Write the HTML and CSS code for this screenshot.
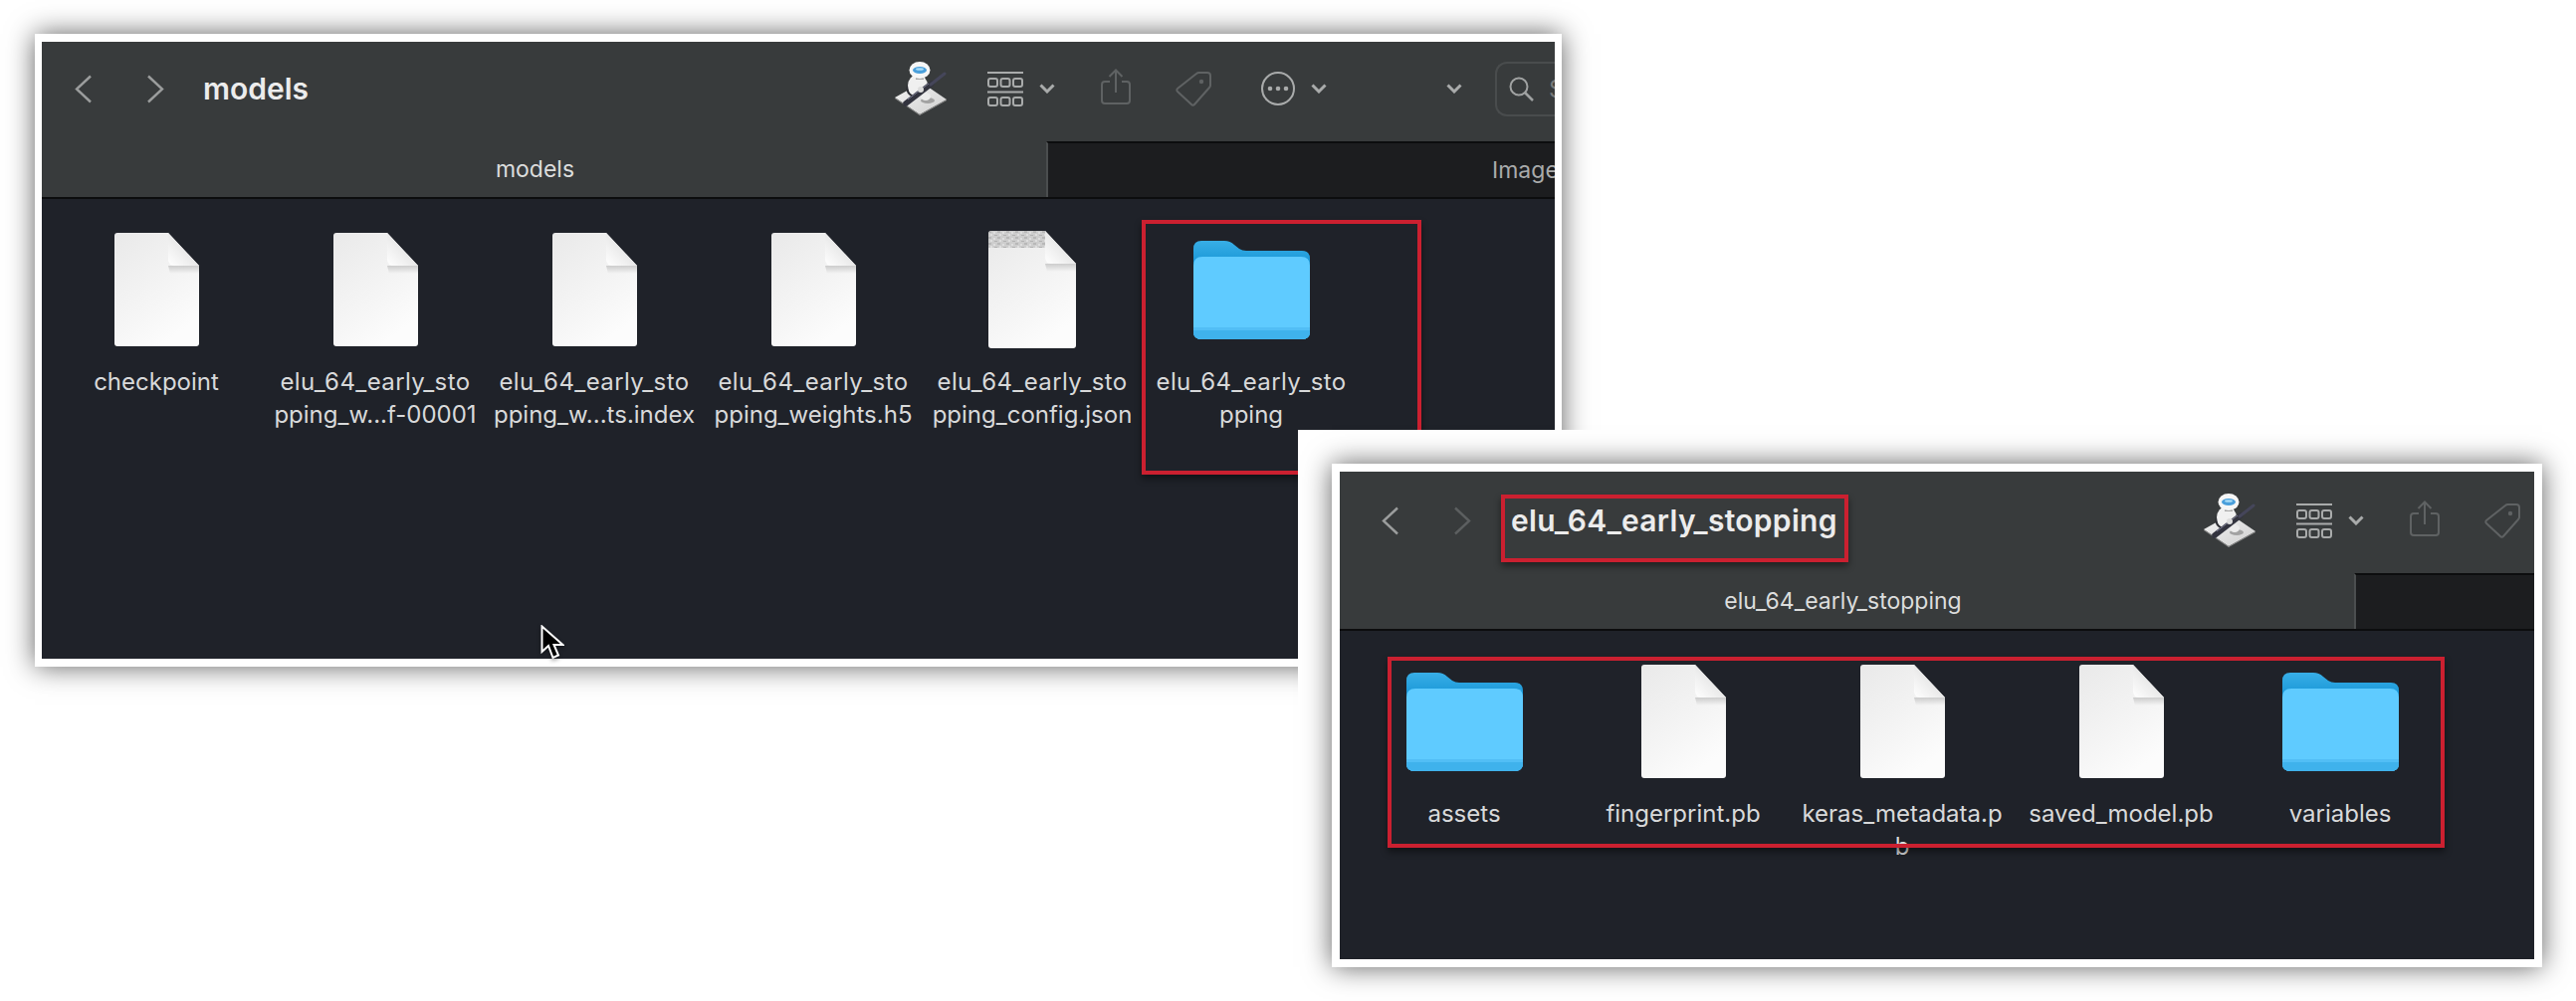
FILE: index.html
```html
<!DOCTYPE html>
<html lang="en">
  <head>
    <meta charset="UTF-8" />
    <title>Finder windows</title>
    <link rel="stylesheet" href="styles.css">
  </head>
  <body>
    <svg class="defs" width="0" height="0" aria-hidden="true">
      <defs>
        <linearGradient id="page" x1="0" y1="0" x2="0.55" y2="1">
          <stop offset="0" stop-color="#e9e9e9" />
          <stop offset="0.7" stop-color="#f6f6f6" />
          <stop offset="1" stop-color="#fcfcfc" />
        </linearGradient>
        <linearGradient id="flap" x1="0" y1="1" x2="1" y2="0">
          <stop offset="0" stop-color="#ffffff" />
          <stop offset="1" stop-color="#d4d4d4" />
        </linearGradient>
        <linearGradient id="shade" x1="0" y1="0" x2="0" y2="1">
          <stop offset="0" stop-color="#000" stop-opacity="0.16" />
          <stop offset="1" stop-color="#000" stop-opacity="0" />
        </linearGradient>
        <linearGradient id="folderBack" x1="0" y1="0" x2="0" y2="1">
          <stop offset="0" stop-color="#38aee6" />
          <stop offset="0.2" stop-color="#1d9ad9" />
        </linearGradient>
        <linearGradient id="base" x1="0" y1="0" x2="1" y2="1">
          <stop offset="0" stop-color="#f4f4f4" />
          <stop offset="1" stop-color="#cfcfcf" />
        </linearGradient>
        <pattern id="noise" width="9" height="6" patternUnits="userSpaceOnUse">
          <rect width="9" height="6" fill="#cdcdcd" />
          <rect x="0" y="0" width="3" height="2" fill="#b8b8b8" />
          <rect x="5" y="1" width="2" height="2" fill="#dedede" />
          <rect x="2" y="3" width="2" height="2" fill="#dedede" />
          <rect x="6" y="4" width="3" height="1" fill="#b2b2b2" />
        </pattern>

        <symbol id="i-file" viewBox="0 0 85 114">
          <path d="M3 0H54L85 33V111a3 3 0 0 1-3 3H3a3 3 0 0 1-3-3V3a3 3 0 0 1 3-3Z" fill="url(#page)" />
          <path d="M54 33H85V41H56Z" fill="url(#shade)" />
          <path d="M54 0L85 33H60a6 6 0 0 1-6-6Z" fill="url(#flap)" />
        </symbol>
        <symbol id="i-file-noisy" viewBox="0 0 88 118">
          <path d="M3 0H57L88 33V115a3 3 0 0 1-3 3H3a3 3 0 0 1-3-3V3a3 3 0 0 1 3-3Z" fill="url(#page)" />
          <path d="M3 0H57V17H0V3a3 3 0 0 1 3-3Z" fill="url(#noise)" />
          <path d="M57 33H88V41H59Z" fill="url(#shade)" />
          <path d="M57 0L88 33H63a6 6 0 0 1-6-6Z" fill="url(#flap)" />
        </symbol>
        <symbol id="i-folder" viewBox="0 0 117 99">
          <path d="M8 0H31Q37 0 41 4L46 8Q49 10 53 10H109Q117 10 117 18V91Q117 99 109 99H8Q0 99 0 91V8Q0 0 8 0Z" fill="url(#folderBack)" />
          <path d="M9 16H108Q117 16 117 25V91Q117 99 109 99H8Q0 99 0 91V25Q0 16 9 16Z" fill="#5fcbff" />
          <path d="M0 87H117V91Q117 99 109 99H8Q0 99 0 91Z" fill="#3fb2ec" />
          <path d="M0 87H117V90H0Z" fill="#52bef5" />
        </symbol>
        <symbol id="i-robot" viewBox="0 0 52 54">
          <path d="M0 36L27 21L52 38L25 53Z" fill="url(#base)" />
          <path d="M0 36L25 53L52 38V39L25 54L0 37Z" fill="#8f8f8f" />
          <ellipse cx="33" cy="39" rx="7" ry="3" fill="#a2a2a2" />
          <path d="M15 21Q9 31 19 35" fill="none" stroke="#2c2d33" stroke-width="2.200" />
          <ellipse cx="23" cy="24" rx="10" ry="11" fill="#f0f0f0" />
          <ellipse cx="31" cy="35" rx="5" ry="4" fill="#ececec" />
          <rect x="21" y="13" width="8" height="5" fill="#a8a8a8" />
          <ellipse cx="25" cy="8.500" rx="10.500" ry="8.500" fill="#f6f6f6" />
          <ellipse cx="25" cy="8.500" rx="7" ry="3.500" fill="#4a9fdb" />
          <ellipse cx="25" cy="7.500" rx="4" ry="1.300" fill="#a9dcf7" />
          <path d="M11 42L37 22" stroke="#33343f" stroke-width="5.500" stroke-linecap="round" />
          <path d="M36 23L50 12" stroke="#45465a" stroke-width="3" stroke-linecap="round" />
          <path d="M13 38L34 22" stroke="#7a7b92" stroke-width="1" />
          <circle cx="26" cy="28" r="3" fill="#dcdcdc" />
        </symbol>
        <symbol id="i-grid" viewBox="0 0 36 35">
          <g fill="none" stroke="currentColor" stroke-width="2">
            <path d="M0 1H36M0 20.500H36" />
            <rect x="1" y="7" width="9" height="8" rx="2" />
            <rect x="13.500" y="7" width="9" height="8" rx="2" />
            <rect x="26" y="7" width="9" height="8" rx="2" />
            <rect x="1" y="26" width="9" height="8" rx="2" />
            <rect x="13.500" y="26" width="9" height="8" rx="2" />
            <rect x="26" y="26" width="9" height="8" rx="2" />
          </g>
        </symbol>
        <symbol id="i-chev" viewBox="0 0 16 10">
          <path d="M1.500 1.500L8 8L14.500 1.500" fill="none" stroke="currentColor" stroke-width="3" />
        </symbol>
        <symbol id="i-share" viewBox="0 0 30 36">
          <path d="M9 13H4a3 3 0 0 0-3 3V32a3 3 0 0 0 3 3H26a3 3 0 0 0 3-3V16a3 3 0 0 0-3-3H21M15 24V1.500M8.500 8L15 1.500L21.500 8" fill="none" stroke="currentColor" stroke-width="2" />
        </symbol>
        <symbol id="i-tag" viewBox="0 0 37 37">
          <path d="M24 2H32a3 3 0 0 1 3 3V15a4 4 0 0 1-1 2L19 34a2 2 0 0 1-3 0L2 21a2 2 0 0 1 0-3L21 3a4 4 0 0 1 3-1Z" fill="none" stroke="currentColor" stroke-width="2" />
          <circle cx="26" cy="11" r="2.200" fill="currentColor" />
        </symbol>
        <symbol id="i-more" viewBox="0 0 34 34">
          <circle cx="17" cy="17" r="16" fill="none" stroke="currentColor" stroke-width="2" />
          <circle cx="9" cy="17" r="2.300" fill="currentColor" />
          <circle cx="17" cy="17" r="2.300" fill="currentColor" />
          <circle cx="25" cy="17" r="2.300" fill="currentColor" />
        </symbol>
        <symbol id="i-search" viewBox="0 0 25 25">
          <circle cx="10" cy="10" r="8.500" fill="none" stroke="currentColor" stroke-width="2" />
          <path d="M16 16L24 24" stroke="currentColor" stroke-width="2.500" />
        </symbol>
        <symbol id="i-back" viewBox="0 0 18 29">
          <path d="M16 1.500L2 14.500L16 27.500" fill="none" stroke="currentColor" stroke-width="2.400" />
        </symbol>
        <symbol id="i-forward" viewBox="0 0 18 29">
          <path d="M2 1.500L16 14.500L2 27.500" fill="none" stroke="currentColor" stroke-width="2.400" />
        </symbol>
      </defs>
    </svg>

    <section class="window window-models">
      <header class="toolbar">
        <svg class="nav"><use href="#i-back" /></svg>
        <svg class="nav nav-next"><use href="#i-forward" /></svg>
        <h1 class="title">models</h1>
        <div class="tools">
          <svg class="robot"><use href="#i-robot" /></svg>
          <svg class="grid-icon"><use href="#i-grid" /></svg>
          <svg class="chev"><use href="#i-chev" /></svg>
          <svg class="share"><use href="#i-share" /></svg>
          <svg class="tag"><use href="#i-tag" /></svg>
          <svg class="more"><use href="#i-more" /></svg>
          <svg class="chev"><use href="#i-chev" /></svg>
          <svg class="chev chev-far"><use href="#i-chev" /></svg>
          <div class="search">
            <svg class="search-icon"><use href="#i-search" /></svg>
            <span>Search</span>
          </div>
        </div>
      </header>
      <nav class="tabs">
        <div class="tab active">models</div>
        <div class="tab">Images</div>
      </nav>
      <div class="files">
        <div class="item">
          <div class="icon"><svg class="file"><use href="#i-file" /></svg></div>
          <div class="label">checkpoint</div>
        </div>
        <div class="item">
          <div class="icon"><svg class="file"><use href="#i-file" /></svg></div>
          <div class="label"><span class="stem">elu_64_early_sto</span><br />pping_w...f-00001</div>
        </div>
        <div class="item">
          <div class="icon"><svg class="file"><use href="#i-file" /></svg></div>
          <div class="label"><span class="stem">elu_64_early_sto</span><br />pping_w...ts.index</div>
        </div>
        <div class="item">
          <div class="icon"><svg class="file"><use href="#i-file" /></svg></div>
          <div class="label"><span class="stem">elu_64_early_sto</span><br />pping_weights.h5</div>
        </div>
        <div class="item">
          <div class="icon"><svg class="file-noisy"><use href="#i-file-noisy" /></svg></div>
          <div class="label"><span class="stem">elu_64_early_sto</span><br />pping_config.json</div>
        </div>
        <div class="item">
          <div class="icon"><svg class="folder"><use href="#i-folder" /></svg></div>
          <div class="label"><span class="stem">elu_64_early_sto</span><br />pping</div>
        </div>
      </div>
      <div class="mark mark-folder"></div>
      <svg class="cursor" viewBox="0 0 24 36">
        <path d="M1.500 1.500V27L8 21L12.500 33L18 30.500L13.500 20H22.500Z" fill="#000" stroke="#fff" stroke-width="2" />
      </svg>
    </section>

    <div class="inset">
      <section class="window window-saved">
        <header class="toolbar">
          <svg class="nav"><use href="#i-back" /></svg>
          <svg class="nav nav-next off"><use href="#i-forward" /></svg>
          <h1 class="title">elu_64_early_stopping</h1>
          <div class="tools">
            <svg class="robot"><use href="#i-robot" /></svg>
            <svg class="grid-icon"><use href="#i-grid" /></svg>
            <svg class="chev"><use href="#i-chev" /></svg>
            <svg class="share"><use href="#i-share" /></svg>
            <svg class="tag"><use href="#i-tag" /></svg>
          </div>
        </header>
        <nav class="tabs">
          <div class="tab active">elu_64_early_stopping</div>
          <div class="tab"></div>
        </nav>
        <div class="files">
          <div class="item">
            <div class="icon"><svg class="folder"><use href="#i-folder" /></svg></div>
            <div class="label">assets</div>
          </div>
          <div class="item">
            <div class="icon"><svg class="file"><use href="#i-file" /></svg></div>
            <div class="label">fingerprint.pb</div>
          </div>
          <div class="item">
            <div class="icon"><svg class="file"><use href="#i-file" /></svg></div>
            <div class="label">keras_metadata.p<br />b</div>
          </div>
          <div class="item">
            <div class="icon"><svg class="file"><use href="#i-file" /></svg></div>
            <div class="label">saved_model.pb</div>
          </div>
          <div class="item">
            <div class="icon"><svg class="folder"><use href="#i-folder" /></svg></div>
            <div class="label">variables</div>
          </div>
        </div>
        <div class="mark mark-title"></div>
        <div class="mark mark-files"></div>
      </section>
    </div>
  </body>
</html>
```

FILE: styles.css
```css
body {
  margin: 0;
  width: 2588px;
  height: 1006px;
  overflow: hidden;
  position: relative;
  background-color: #fff;
  font-family: Inter, "Liberation Sans", sans-serif;
}

.defs {
  position: absolute;
}

/* windows */
.window {
  box-sizing: border-box;
  border: solid #fff;
  background-color: #1f2229;
  box-shadow: 0 0 26px rgba(0, 0, 0, 0.62);
  display: flex;
  flex-direction: column;
  position: relative;
}
.window-models {
  position: absolute;
  left: 35px;
  top: 34px;
  width: 1534px;
  height: 636px;
  border-width: 8px 7px;
}
.window-saved {
  height: 100%;
  border-width: 8px;
}
.inset {
  position: absolute;
  left: 1304px;
  top: 432px;
  width: 1284px;
  height: 574px;
  box-sizing: border-box;
  padding: 34px;
  background-color: #fff;
}

/* toolbar */
.toolbar {
  flex: none;
  box-sizing: border-box;
  height: 100px;
  padding: 0 0 6px 33px;
  display: flex;
  align-items: center;
  overflow: hidden;
  background-color: #383b3c;
  color: #a9abab;
}
.window-saved .toolbar {
  height: 102px;
  padding: 0 13px 4px 42px;
}
.nav {
  flex: none;
  width: 18px;
  height: 29px;
  color: #9b9d9d;
}
.nav-next {
  margin-left: 54px;
}
.nav-next.off {
  color: #5c5f60;
}
.title {
  flex: 1;
  margin: 0 0 0 39px;
  font-size: 30px;
  font-weight: 600;
  line-height: 40px;
  color: #ececec;
  white-space: nowrap;
}
.window-saved .title {
  margin-left: 40px;
  letter-spacing: 0.3px;
}
.tools {
  flex: none;
  display: flex;
  align-items: center;
}
.tools svg {
  flex: none;
}
.robot {
  width: 52px;
  height: 54px;
}
.grid-icon {
  width: 36px;
  height: 35px;
  margin-left: 41px;
}
.chev {
  width: 16px;
  height: 10px;
  margin-left: 16px;
}
.chev-far {
  margin-left: 120px;
}
.share {
  width: 30px;
  height: 36px;
  margin-left: 46px;
  margin-bottom: 4px;
  color: #5f6263;
}
.tag {
  width: 37px;
  height: 37px;
  margin-left: 45px;
  color: #5f6263;
}
.more {
  width: 34px;
  height: 34px;
  margin-left: 49px;
}
.search {
  box-sizing: border-box;
  width: 60px;
  height: 55px;
  margin-left: 33px;
  padding-left: 12px;
  display: flex;
  align-items: center;
  gap: 15px;
  overflow: hidden;
  border: 2px solid #494c4d;
  border-right: 0;
  border-radius: 12px 0 0 12px;
  font-size: 24px;
  color: #77797a;
}
.search-icon {
  width: 25px;
  height: 25px;
  color: #a0a2a2;
}

/* tabs */
.tabs {
  flex: none;
  height: 56px;
  display: flex;
  overflow: hidden;
  border-bottom: 2px solid #0c0d0e;
}
.tab {
  flex: none;
  box-sizing: border-box;
  width: 1009px;
  padding-right: 36px;
  display: flex;
  align-items: center;
  justify-content: center;
  font-size: 23px;
  color: #a9abab;
  background-color: #1c1d1f;
  border-top: 2px solid #0c0d0e;
  border-left: 2px solid #4b4e4f;
}
.tab.active {
  padding-right: 18px;
  color: #dcdddd;
  background-color: #383b3c;
  border: 0;
}
.window-saved .tab.active {
  width: 1019px;
  padding-right: 8px;
}

/* icon view */
.files {
  flex: 1;
  display: flex;
  align-items: flex-start;
  padding: 31px 0 0 5px;
}
.window-saved .files {
  padding-left: 15px;
}
.item {
  flex: none;
  width: 220px;
  display: flex;
  flex-direction: column;
  align-items: center;
}
.icon {
  height: 120px;
  display: flex;
  align-items: center;
  justify-content: center;
}
.file {
  width: 85px;
  height: 114px;
}
.file-noisy {
  width: 88px;
  height: 118px;
}
.folder {
  width: 117px;
  height: 99px;
}
.label {
  margin-top: 16px;
  font-size: 24px;
  line-height: 33px;
  color: #d8d9da;
  text-align: center;
  white-space: nowrap;
}
.stem {
  letter-spacing: 0.4px;
}

/* red annotation boxes */
.mark {
  position: absolute;
  box-sizing: border-box;
  border: 4px solid #cb2030;
  box-shadow: 0 4px 7px rgba(0, 0, 0, 0.45);
}
.mark-folder {
  left: 1105px;
  top: 179px;
  width: 281px;
  height: 256px;
}
.mark-title {
  left: 162px;
  top: 23px;
  width: 349px;
  height: 68px;
}
.mark-files {
  left: 48px;
  top: 186px;
  width: 1062px;
  height: 192px;
}

.cursor {
  position: absolute;
  left: 501px;
  top: 586px;
  width: 24px;
  height: 36px;
  filter: drop-shadow(0 2px 2px rgba(0, 0, 0, 0.4));
}
```
